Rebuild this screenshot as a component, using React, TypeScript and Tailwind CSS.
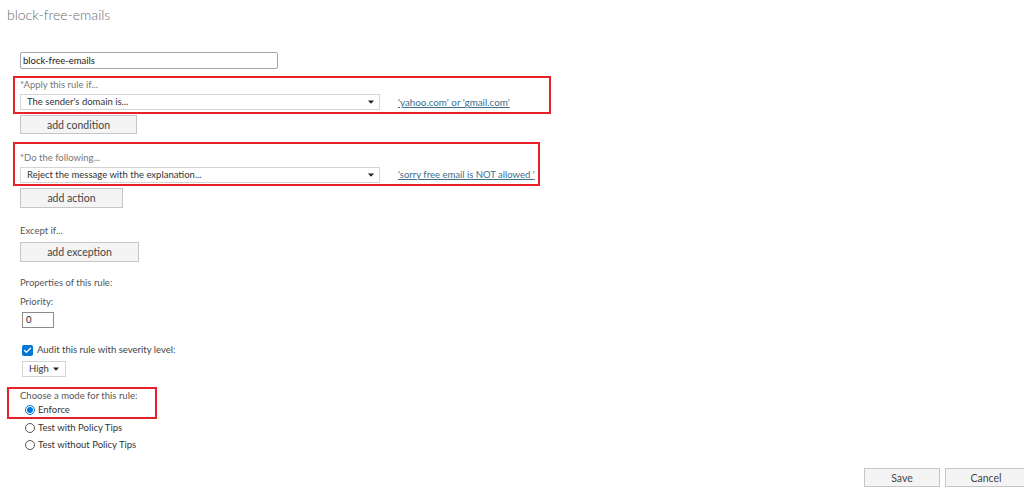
import { Check } from 'lucide-react'

const font = { fontFamily: 'Lato, "Noto Sans", Arial, sans-serif' }

function Caret() {
  return (
    <svg width="6" height="4" viewBox="0 0 6 4" className="shrink-0">
      <path d="M0 0.5h6L3 3.8z" fill="#222" />
    </svg>
  )
}

function Select({ value, className }: { value: string; className: string }) {
  return (
    <div className={`flex shrink-0 items-center justify-between border border-[#d4d4d4] bg-white pl-[6px] pr-[5px] text-[9.5px] leading-[14px] text-[#333] ${className}`}>
      <span className="whitespace-nowrap">{value}</span>
      <Caret />
    </div>
  )
}

function Button({ label, className }: { label: string; className: string }) {
  return (
    <button className={`flex items-center justify-center border border-[#c6c6c6] bg-[#f4f4f4] text-[10.5px] leading-[16px] text-[#444] ${className}`}>
      {label}
    </button>
  )
}

function Label({ text, className = '' }: { text: string; className?: string }) {
  return <div className={`h-[14px] text-[9.5px] leading-[14px] text-[#555] ${className}`}>{text}</div>
}

function Radio({ checked, label, className = '' }: { checked?: boolean; label: string; className?: string }) {
  return (
    <div className={`flex h-[14px] items-center gap-[3px] ${className}`}>
      <span
        className={`flex h-[10px] w-[10px] items-center justify-center rounded-full border ${
          checked ? 'border-[#0078d7]' : 'border-[#555]'
        } bg-white`}
      >
        {checked && <span className="h-[6px] w-[6px] rounded-full bg-[#0078d7]" />}
      </span>
      <span className="text-[9.5px] leading-[14px] text-[#333]">{label}</span>
    </div>
  )
}

export default function App() {
  return (
    <div className="h-[496px] w-[1024px] overflow-hidden bg-white" style={font}>
      {/* Header */}
      <div className="h-[52px] pl-[7px] pt-[5px]">
        <h1 className="text-[14px] font-light leading-[20px] text-[#6a6a6a]">block-free-emails</h1>
      </div>

      <div className="pl-[20px]">
        <div className="flex h-[17px] w-[258px] items-center rounded-[2px] border border-[#a6a6a6] px-[2px] text-[9.5px] leading-[14px] text-[#222]">
          block-free-emails
        </div>

        {/* Conditions */}
        <div className="-ml-[7px] mt-[7px] w-[538px] border-2 border-[#e8202a] pb-[2px] pl-[5px]">
          <Label text="*Apply this rule if..." className="text-[#777]" />
          <div className="mt-[2px] flex items-center">
            <Select value="The sender's domain is..." className="h-[16px] w-[360px]" />
            <a className="ml-[18px] whitespace-nowrap text-[9.8px] leading-[14px] text-[#3d6e8e] underline">'yahoo.com' or 'gmail.com'</a>
          </div>
        </div>
        <Button label="add condition" className="mt-[1px] h-[19px] w-[117px]" />

        {/* Actions */}
        <div className="-ml-[7px] mt-[8px] w-[527px] border-2 border-[#e8202a] pb-[1px] pl-[5px] pt-[7px]">
          <Label text="*Do the following..." className="text-[#777]" />
          <div className="mt-[2px] flex items-center">
            <Select value="Reject the message with the explanation..." className="h-[16px] w-[360px]" />
            <a className="ml-[18px] whitespace-pre text-[9.5px] leading-[14px] text-[#3d6e8e] underline">
              'sorry free email is NOT allowed '
            </a>
          </div>
        </div>
        <Button label="add action" className="mt-[2px] h-[20px] w-[103px]" />

        {/* Exceptions */}
        <Label text="Except if..." className="mt-[16px]" />
        <Button label="add exception" className="mt-[4px] h-[20px] w-[119px]" />

        {/* Properties */}
        <Label text="Properties of this rule:" className="mt-[14px]" />
        <Label text="Priority:" className="mt-[5px]" />
        <div className="ml-[2px] mt-[3px] flex h-[16px] w-[32px] items-center border border-[#8a8a8a] pl-[3px] text-[9.5px] leading-[14px] text-[#222]">
          0
        </div>

        <div className="ml-[2px] mt-[15px] flex h-[14px] items-center gap-[4px]">
          <span className="flex h-[11px] w-[11px] items-center justify-center rounded-[2px] bg-[#0078d7]">
            <Check size={9} strokeWidth={3.5} color="#fff" />
          </span>
          <span className="text-[9.5px] leading-[14px] text-[#444]">Audit this rule with severity level:</span>
        </div>
        <Select value="High" className="ml-[2px] mt-[4px] h-[16px] w-[44px] pl-[5px] pr-[6px]" />

        {/* Mode */}
        <div className="-ml-[13px] mt-[10px] w-[150px] border-2 border-[#e8202a] pl-[11px]">
          <Label text="Choose a mode for this rule:" />
          <Radio checked label="Enforce" className="ml-[5px]" />
        </div>
        <Radio label="Test with Policy Tips" className="ml-[5px] mt-[2px]" />
        <Radio label="Test without Policy Tips" className="ml-[5px] mt-[3px]" />
      </div>

      {/* Footer */}
      <div className="-mr-[3px] mt-[16px] flex justify-end gap-[5px]">
        <Button label="Save" className="h-[19px] w-[76px]" />
        <Button label="Cancel" className="h-[19px] w-[82px]" />
      </div>
    </div>
  )
}
